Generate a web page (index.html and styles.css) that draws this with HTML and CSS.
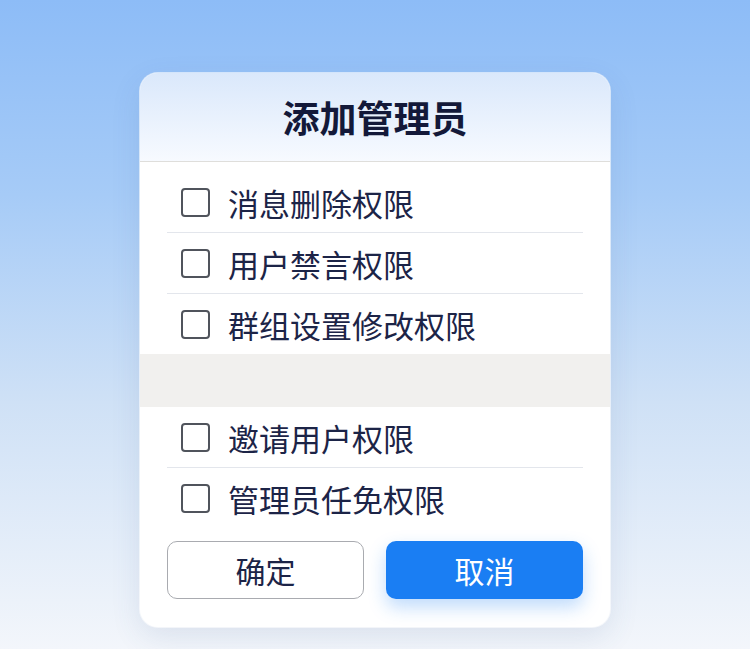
FILE: index.html
```html
<!DOCTYPE html>
<html lang="zh-CN">
<head>
    <meta charset="UTF-8">
    <meta name="viewport" content="width=device-width, initial-scale=1.0">
    <title>添加管理员</title>
    <link rel="stylesheet" href="styles.css">
</head>
<body>
    <div class="dialog">
        <div class="dialog-header">
            <h2>添加管理员</h2>
        </div>
        <div class="group group-first">
            <label class="perm"><input type="checkbox"><span>消息删除权限</span></label>
            <label class="perm"><input type="checkbox"><span>用户禁言权限</span></label>
            <label class="perm"><input type="checkbox"><span>群组设置修改权限</span></label>
        </div>
        <div class="divider-band"></div>
        <div class="group">
            <label class="perm"><input type="checkbox"><span>邀请用户权限</span></label>
            <label class="perm"><input type="checkbox"><span>管理员任免权限</span></label>
        </div>
        <div class="actions">
            <button class="btn btn-outline">确定</button>
            <button class="btn btn-primary">取消</button>
        </div>
    </div>
</body>
</html>
```

FILE: styles.css
```css
html, body {
    margin: 0;
    height: 100%;
}
body {
    font-family: "Noto Sans CJK SC", "Noto Sans", sans-serif;
    background: linear-gradient(180deg, #8dbcf7 0%, #a6cbf7 30%, #cfe1f6 62%, #f3f6fb 100%);
    padding-top: 73px;
    box-sizing: border-box;
}
.dialog {
    width: 470px;
    margin: 0 auto;
    background: #fff;
    border-radius: 18px;
    overflow: hidden;
    box-shadow: 0 0 0 1px rgba(255, 255, 255, 0.6), 0 10px 30px rgba(60, 90, 140, 0.12);
}
.dialog-header {
    height: 88px;
    display: flex;
    align-items: center;
    justify-content: center;
    background: linear-gradient(180deg, #dae8fb 0%, #f7faff 100%);
    border-bottom: 1px solid #dfdedb;
}
.dialog-header h2 {
    margin: 0;
    font-size: 37px;
    font-weight: bold;
    color: #131939;
    line-height: 1;
}
.group {
    padding: 0 27px;
}
.group-first {
    padding-top: 10px;
}
.perm {
    display: flex;
    align-items: center;
    gap: 18px;
    height: 60px;
    padding-left: 14px;
    border-bottom: 1px solid #e3e6ec;
    font-size: 31px;
    color: #1c2447;
}
.perm:last-child {
    border-bottom: none;
}
.perm input {
    appearance: none;
    -webkit-appearance: none;
    margin: 0;
    width: 29px;
    height: 29px;
    box-sizing: border-box;
    border: 2px solid #50545c;
    border-radius: 4px;
    background: #fff;
    flex-shrink: 0;
}
.divider-band {
    height: 53px;
    background: #f1f0ee;
}
.actions {
    display: grid;
    grid-template-columns: 1fr 1fr;
    gap: 22px;
    padding: 13px 27px 28px;
}
.btn {
    height: 58px;
    border-radius: 10px;
    font-family: inherit;
    font-size: 30px;
    cursor: pointer;
}
.btn-outline {
    background: #fff;
    border: 1px solid #a9abb0;
    color: #1c2447;
}
.btn-primary {
    background: #1a7ef3;
    border: none;
    color: #fff;
    box-shadow: 0 8px 18px rgba(26, 126, 243, 0.28);
}
```
